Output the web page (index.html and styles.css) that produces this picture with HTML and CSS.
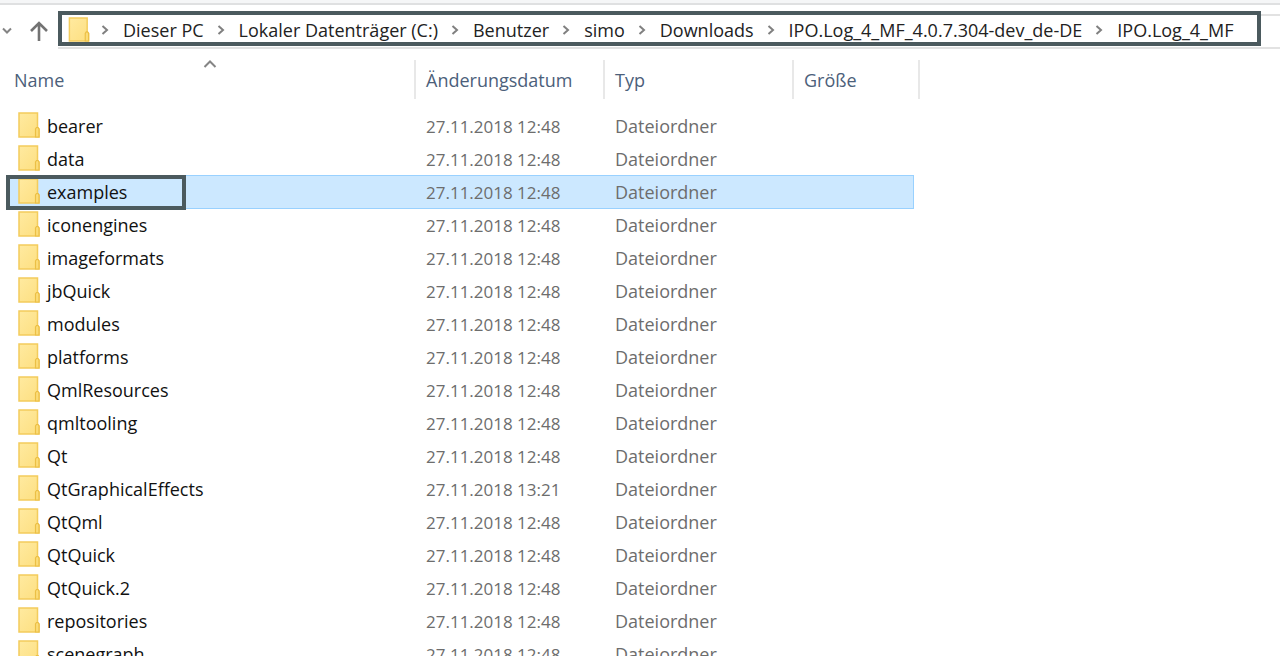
FILE: index.html
```html
<!DOCTYPE html>
<html lang="de">
<head>
<meta charset="utf-8">
<meta name="viewport" content="width=device-width, initial-scale=1">
<title>IPO.Log_4_MF</title>
<link rel="stylesheet" href="styles.css">
</head>
<body>
<svg class="defs" aria-hidden="true">
  <defs>
    <linearGradient id="paper" x1="0" y1="0" x2="1" y2="1">
      <stop offset="0" stop-color="#ffeaa0"/>
      <stop offset="1" stop-color="#fddf80"/>
    </linearGradient>
    <symbol id="folder" viewBox="0 0 22 26">
      <path d="M1 1H19.500V15.500L21 17V25H1Z" fill="url(#paper)" stroke="#f3cc5c" stroke-width="1.500"/>
      <path d="M17.500 25V17L18.500 15.500H20L21 17V25Z" fill="#fbdc78" stroke="#ecbf45" stroke-width="1.200"/>
    </symbol>
    <symbol id="chevron" viewBox="0 0 8 10">
      <path d="M1.500 1L6 5L1.500 9" fill="none" stroke="#808080" stroke-width="2"/>
    </symbol>
  </defs>
</svg>
<div class="ribbon"></div>
<header class="nav">
  <button class="nav-button recent" aria-label="Zuletzt besucht">
    <svg width="12" height="8" viewBox="0 0 12 8"><path d="M2 1.500L6 5.500L10 1.500" fill="none" stroke="#848484" stroke-width="2"/></svg>
  </button>
  <button class="nav-button up" aria-label="Nach oben">
    <svg width="20" height="20" viewBox="0 0 20 20"><path d="M10 20V2M2 10L10 2L18 10" fill="none" stroke="#737373" stroke-width="2.600"/></svg>
  </button>
  <div class="address">
    <nav class="crumbs" aria-label="Pfad">
      <svg class="folder"><use href="#folder"/></svg>
      <svg class="chevron"><use href="#chevron"/></svg><a href="#">Dieser PC</a>
      <svg class="chevron"><use href="#chevron"/></svg><a href="#">Lokaler Datenträger (C:)</a>
      <svg class="chevron"><use href="#chevron"/></svg><a href="#">Benutzer</a>
      <svg class="chevron"><use href="#chevron"/></svg><a href="#">simo</a>
      <svg class="chevron"><use href="#chevron"/></svg><a href="#">Downloads</a>
      <svg class="chevron"><use href="#chevron"/></svg><a href="#">IPO.Log_4_MF_4.0.7.304-dev_de-DE</a>
      <svg class="chevron"><use href="#chevron"/></svg><a href="#">IPO.Log_4_MF</a>
    </nav>
  </div>
</header>
<main class="listing">
  <table class="files">
    <colgroup><col class="col-name"><col class="col-date"><col class="col-type"><col class="col-size"></colgroup>
    <thead>
      <tr>
        <th scope="col"><div class="head">Name<svg class="sort" viewBox="0 0 14 8"><path d="M1.500 7L7 1.500L12.500 7" fill="none" stroke="#858585" stroke-width="2"/></svg></div></th>
        <th scope="col"><div class="head">Änderungsdatum</div></th>
        <th scope="col"><div class="head">Typ</div></th>
        <th scope="col"><div class="head">Größe</div></th>
      </tr>
    </thead>
    <tbody id="rows"></tbody>
  </table>
</main>
<script src="files.js"></script>
</body>
</html>
```
FILE: files.js
```js
const names = ["bearer", "data", "examples", "iconengines", "imageformats", "jbQuick", "modules", "platforms", "QmlResources", "qmltooling", "Qt", "QtGraphicalEffects", "QtQml", "QtQuick", "QtQuick.2", "repositories", "scenegraph"];
const body = document.getElementById("rows");
for (const name of names) {
  const row = body.insertRow();
  if (name === "examples") row.className = "selected";
  const time = name === "QtGraphicalEffects" ? "13:21" : "12:48";
  row.innerHTML =
    `<td><div class="name"><svg class="folder"><use href="#folder"/></svg>${name}</div></td>` +
    `<td><div class="cell date">27.11.2018 ${time}</div></td>` +
    `<td><div class="cell">Dateiordner</div></td>` +
    `<td><div class="cell last"></div></td>`;
}
```
FILE: styles.css
```css
*, *::after { box-sizing: border-box; }
html, body { height: 100%; }
body {
  margin: 0;
  background: #fff;
  color: #1a1a1a;
  font: 18px/24px "Open Sans", "Noto Sans", sans-serif;
  overflow: hidden;
  display: flex;
  flex-direction: column;
}
.defs { position: absolute; width: 0; height: 0; }
.ribbon {
  flex: none;
  height: 5px;
  background: #f5f6f7;
  border-bottom: 2px solid #dfe0e1;
}
.nav {
  flex: none;
  display: flex;
  align-items: center;
  padding-top: 6px;
}
.nav-button {
  display: flex;
  padding: 2px 0 0;
  border: 0;
  background: none;
}
.recent { margin-left: 1px; }
.up { margin: 0 9px 0 16px; }
.address {
  flex: 1;
  background: linear-gradient(#e2e2e2, #e2e2e2) 0 3px / 100% 2px no-repeat;
  border-bottom: 2px solid #e2e2e2;
  padding: 0 19px 1px 0;
}
.crumbs {
  display: flex;
  align-items: center;
  height: 35px;
  border: 4px solid #4b5a5e;
  background: #fff;
  padding: 2px 6px 0;
}
.folder { flex: none; width: 22px; height: 26px; }
.crumbs .folder { height: 25px; }
.chevron { flex: none; width: 8px; height: 10px; margin: 0 14px 0 13px; }
.crumbs .folder + .chevron { margin-left: 11px; }
.crumbs a {
  color: #222;
  text-decoration: none;
  white-space: nowrap;
}
.listing { flex: 1; min-height: 0; overflow: hidden; padding: 0 8px; }
.files {
  table-layout: fixed;
  width: 912px;
  border-collapse: collapse;
}
.col-name { width: 408px; }
.col-date, .col-type { width: 189px; }
th, td { padding: 0; text-align: left; font-weight: 400; }
th { height: 60px; padding: 11px 0 10px; }
.head {
  position: relative;
  height: 39px;
  line-height: 40px;
  padding-left: 10px;
  border-right: 2px solid #e8e8e8;
  color: #4c607a;
}
th:first-child .head { padding-left: 6px; }
.sort { position: absolute; left: 195px; top: 0; width: 14px; height: 8px; }
.name, .cell {
  height: 33px;
  padding-left: 10px;
  border: 0 solid #99d1ff;
  line-height: 35px;
  white-space: nowrap;
}
.name { display: flex; gap: 7px; color: #111; }
.name .folder { margin-top: 3px; }
.cell { color: #6d6d6d; }
.date { font-size: 17px; }
.last { margin-right: 6px; }
.selected .name, .selected .cell {
  height: 34px;
  margin-bottom: -1px;
  line-height: 33px;
  border-width: 1px 0;
  background: #cce8ff;
}
.selected .name .folder { margin-top: 2px; }
.selected .last { border-right-width: 1px; }
.selected .name { position: relative; }
.selected .name::after {
  content: "";
  position: absolute;
  left: -2px;
  top: -1px;
  width: 180px;
  height: 35px;
  border: 4px solid #4b5a5e;
}
```
